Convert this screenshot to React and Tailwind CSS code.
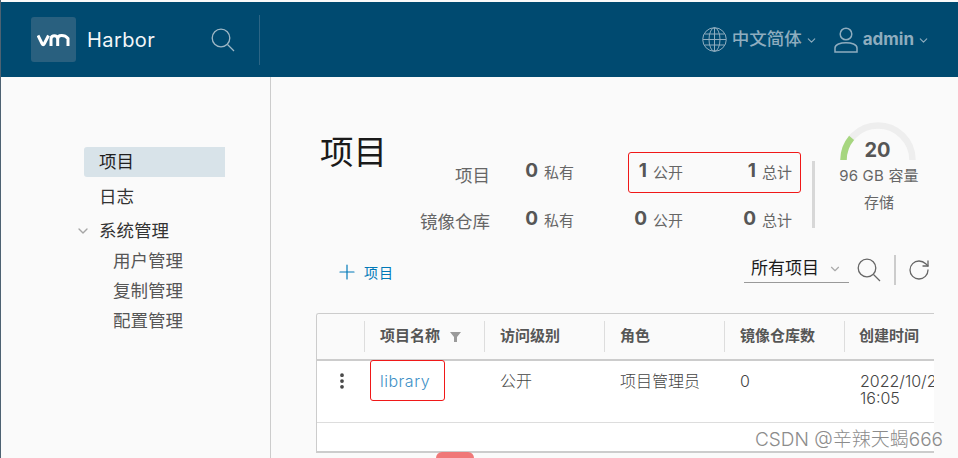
import React from "react";
import { ChevronDown, Plus, RotateCw, EllipsisVertical } from "lucide-react";

const FONT = { fontFamily: '"Inter","Noto Sans CJK SC",sans-serif' };

function SearchIcon({ className }) {
  return (
    <svg className={className} viewBox="0 0 24 24" fill="none" stroke="currentColor" strokeWidth="1.3">
      <circle cx="10" cy="10" r="8.8" />
      <path d="M16.5 16.5 23 23" />
    </svg>
  );
}

function Stat({ n, label }) {
  return (
    <div className="flex h-[48px] items-center justify-end gap-[6px]">
      <span className="-mt-[3px] text-[19px] font-bold text-[#565656]">{n}</span>
      <span className="text-[15px] text-[#666]">{label}</span>
    </div>
  );
}

function Th({ children, w, sort }) {
  return (
    <div className={"flex h-[31px] shrink-0 items-center gap-[10px] border-r border-[#ddd] pl-[15px] text-[15px] font-bold text-[#565656] " + w}>
      <span>{children}</span>
      {sort && (
        <svg className="h-[10px] w-[11px]" viewBox="0 0 11 10">
          <path d="M0 0h11L7 5v5H4V5z" fill="#9a9a9a" />
        </svg>
      )}
    </div>
  );
}

export default function App() {
  return (
    <div className="relative flex h-[458px] w-[958px] flex-col overflow-hidden border-l border-[#4d6272] bg-[#fafafa] pt-[2px] font-normal" style={FONT}>
      <header className="flex h-[75px] shrink-0 items-center bg-[#004a70] pl-[30px] pr-[28px]">
        <div className="flex h-[45px] w-[45px] items-center justify-center rounded-[3px] bg-[#29607f]">
          <svg className="h-[14px] w-[33px]" viewBox="0 0 33 14" fill="none" stroke="#fff" strokeWidth="3">
            <path d="M1 2.5 5 10.5c.8 1.6 1.6 1.6 2.4 0L11.500 2.500" />
            <path d="M14 13V6c0-4.500 6.700-4.500 6.700 0v7M20.700 6c0-4.500 6.800-4.500 10.300-.5V13" />
          </svg>
        </div>
        <span className="ml-[11px] text-[20px] tracking-[0.4px] text-[#f2f6f8]">Harbor</span>
        <SearchIcon className="ml-[56px] h-[24px] w-[24px] text-[#9fb8c6]" />
        <div className="ml-[24px] h-[50px] w-px bg-[#2c6585]" />
        <div className="ml-auto flex items-center text-[#8fadbf]">
          <svg className="h-[25px] w-[25px]" viewBox="0 0 25 25" fill="none" stroke="currentColor" strokeWidth="1">
            <circle cx="12.500" cy="12.500" r="11.800" />
            <ellipse cx="12.500" cy="12.500" rx="5.500" ry="11.800" />
            <path d="M12.500.7v23.600M2.500 7h20M1 12.500h23M2.500 18h20" />
          </svg>
          <span className="ml-[5px] text-[17.500px] font-medium">中文简体</span>
          <ChevronDown className="ml-[3px] mt-[2px] h-[13px] w-[13px]" />
          <svg className="ml-[16px] h-[26px] w-[24px]" viewBox="0 0 24 26" fill="none" stroke="currentColor" strokeWidth="1.500">
            <circle cx="12" cy="7" r="5.800" />
            <path d="M1 25v-4c0-7 22-7 22 0v4z" />
          </svg>
          <span className="ml-[5px] text-[17px] font-bold">admin</span>
          <ChevronDown className="ml-[3px] mt-[2px] h-[13px] w-[13px]" />
        </div>
      </header>

      <div className="flex min-h-0 flex-1">
        <aside className="w-[270px] shrink-0 border-r border-[#ccc] pl-[83px] pt-[70px] text-[17.500px]">
          <div className="flex h-[30px] w-[141px] items-center rounded-l-[3px] bg-[#d8e3e9] pl-[15px] pt-[1px] text-[#1f1f1f]">项目</div>
          <div className="flex h-[40px] items-center pl-[15px] pt-[1px] text-[#333]">日志</div>
          <div className="relative flex h-[28px] items-center pl-[15px] pt-[1px] text-[#333]">
            <ChevronDown className="absolute left-[-9px] top-[6px] h-[16px] w-[16px] text-[#a5a5a5]" />
            系统管理
          </div>
          <div className="pl-[29px] pt-[1px] text-[#565656]">
            <div className="flex h-[30px] items-center pt-[1px]">用户管理</div>
            <div className="flex h-[30px] items-center pt-[1px]">复制管理</div>
            <div className="flex h-[30px] items-center pt-[1px]">配置管理</div>
          </div>
        </aside>

        <main className="min-w-0 flex-1 pl-[45px]">
          <div className="flex h-[178px]">
            <div className="w-[174px] shrink-0 pt-[58px]">
              <h1 className="pl-[4px] text-[33.500px] leading-[34px] text-[#1a1a1a]">项目</h1>
              <div className="-mt-[6px] h-[26px] text-right text-[17.500px] leading-[26px] text-[#666]">项目</div>
              <div className="mt-[20px] h-[26px] text-right text-[17.500px] leading-[26px] text-[#666]">镜像仓库</div>
            </div>
            <div className="grid h-fit w-[302px] shrink-0 grid-cols-[84px_109px_109px] pt-[72px]">
              <Stat n="0" label="私有" />
              <Stat n="1" label="公开" />
              <Stat n="1" label="总计" />
              <Stat n="0" label="私有" />
              <Stat n="0" label="公开" />
              <Stat n="0" label="总计" />
            </div>
            <div className="ml-[20px] mt-[84px] h-[67px] w-[3px] bg-[#d7d7d7]" />
            <div className="flex w-[128px] shrink-0 flex-col items-center pt-[45px]">
              <div className="relative -ml-[3px] h-[38px] w-[76px]">
                <svg className="h-[38px] w-[76px]" viewBox="0 0 76 38" fill="none" strokeWidth="6.500">
                  <path d="M3.500 38a34.500 34.500 0 0 1 69 0" stroke="#eeeeee" />
                  <path d="M3.500 38A34.500 34.500 0 0 1 11.600 15.800" stroke="#a6d67f" />
                </svg>
                <span className="absolute inset-x-0 top-[16px] text-center text-[20px] font-bold leading-[24px] text-[#565656]">20</span>
              </div>
              <div className="mt-[6px] text-[15px] leading-[20px] tracking-[0.2px] text-[#666]">96 GB 容量</div>
              <div className="mt-[7px] text-[15px] leading-[20px] text-[#666]">存储</div>
            </div>
          </div>

          <div className="flex h-[30px] w-[618px] items-center pl-[19px] pr-[3px]">
            <div className="mt-[4px] flex items-center gap-[5px] text-[#0079b8]">
              <Plus className="h-[24px] w-[24px]" strokeWidth={1.200} />
              <span className="text-[14px] tracking-[1px]">项目</span>
            </div>
            <div className="ml-auto flex h-[28px] w-[105px] items-center self-start border-b border-[#999] pl-[7px]">
              <span className="text-[17px] text-[#1a1a1a]">所有项目</span>
              <ChevronDown className="ml-[9px] h-[14px] w-[14px] text-[#aaa]" />
            </div>
            <SearchIcon className="ml-[8px] h-[24px] w-[24px] text-[#666]" />
            <div className="ml-[13px] h-[30px] w-[2px] bg-[#ccc]" />
            <RotateCw className="ml-[11px] h-[24px] w-[24px] text-[#666]" strokeWidth={1.300} />
          </div>

          <div className="mt-[28px] h-[140px] w-[618px] overflow-hidden rounded-tl-[3px] border-b-2 border-l border-t border-[#ccc] bg-white">
            <div className="flex h-[47px] items-center border-b-2 border-[#ccc] bg-[#fafafa]">
              <Th w="w-[48px]" />
              <Th w="w-[120px]" sort>项目名称</Th>
              <Th w="w-[120px]">访问级别</Th>
              <Th w="w-[120px]">角色</Th>
              <Th w="w-[120px]">镜像仓库数</Th>
              <div className="pl-[14px] text-[15px] font-bold text-[#565656]">创建时间</div>
            </div>
            <div className="flex h-[62px] border-b border-[#ddd] pt-[12px] text-[16px] font-light leading-[17px] text-[#444]">
              <div className="-mt-[2px] flex w-[48px] shrink-0 justify-center pl-[1px]">
                <EllipsisVertical className="h-[20px] w-[20px]" strokeWidth={2.500} />
              </div>
              <div className="w-[120px] shrink-0 pl-[15px] tracking-[0.5px] text-[#3d8fc6]">library</div>
              <div className="w-[120px] shrink-0 pl-[15px]">公开</div>
              <div className="w-[120px] shrink-0 pl-[15px]">项目管理员</div>
              <div className="w-[120px] shrink-0 pl-[15px]">0</div>
              <div className="w-[89px] shrink-0 overflow-hidden whitespace-nowrap pl-[15px]">2022/10/26<br />16:05</div>
            </div>
          </div>
        </main>
      </div>

      {/* annotations over the screenshot */}
      <div className="absolute left-[627px] top-[152px] h-[41px] w-[173px] rounded-[3px] border border-[#f01818]" />
      <div className="absolute left-[369px] top-[360px] h-[41px] w-[75px] rounded-[3px] border border-[#f01818]" />
      <div className="absolute left-[435px] top-[452px] h-[6px] w-[38px] rounded-t-[8px] bg-[#f07878]" />
      <span className="absolute left-[754px] top-[428px] whitespace-nowrap text-[19px] font-light leading-[24px] text-[#8c8c8c]">CSDN @辛辣天蝎666</span>
    </div>
  );
}
